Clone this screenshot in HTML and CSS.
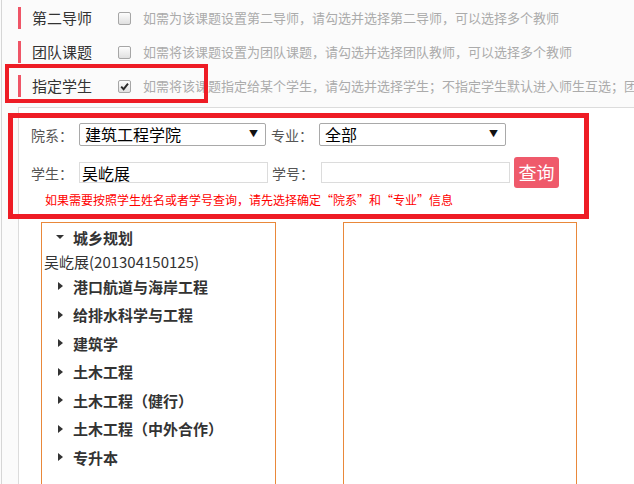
FILE: index.html
```html
<!DOCTYPE html>
<html lang="zh-CN">
<head>
  <meta charset="UTF-8" />
  <meta name="viewport" content="width=device-width, initial-scale=1.0" />
  <title>课题设置</title>
  <link rel="stylesheet" href="styles.css">
</head>
<body>
  <div class="page">
    <div class="opt-row">
      <span class="opt-name">第二导师</span>
      <span class="cbox"></span>
      <span class="opt-tip">如需为该课题设置第二导师，请勾选并选择第二导师，可以选择多个教师</span>
    </div>
    <div class="opt-row">
      <span class="opt-name">团队课题</span>
      <span class="cbox"></span>
      <span class="opt-tip">如需将该课题设置为团队课题，请勾选并选择团队教师，可以选择多个教师</span>
    </div>
    <div class="opt-row">
      <span class="opt-name">指定学生</span>
      <span class="cbox">
        <svg width="9" height="9" viewBox="0 0 9 9"><path d="M1.2 4.6 L3.6 7.2 L8 1.6" fill="none" stroke="#2b2b2b" stroke-width="1.9" /></svg>
      </span>
      <span class="opt-tip">如需将该课题指定给某个学生，请勾选并选择学生；不指定学生默认进入师生互选；团</span>
    </div>

    <div class="panel">
      <form class="search">
        <div class="s-line">
          <label class="s-label">院系：</label>
          <span class="sel-wrap">
            <select class="sel">
              <option>建筑工程学院</option>
            </select>
          </span>
          <label class="s-label s-label-2">专业：</label>
          <span class="sel-wrap">
            <select class="sel">
              <option>全部</option>
            </select>
          </span>
        </div>
        <div class="s-line s-line-2">
          <label class="s-label">学生：</label>
          <input type="text" class="txt" value="吴屹展" />
          <label class="s-label s-label-3">学号：</label>
          <input type="text" class="txt txt-2" value="" />
          <button type="button" class="btn-query">查询</button>
        </div>
        <p class="s-hint">如果需要按照学生姓名或者学号查询，请先选择确定“院系”和“专业”信息</p>
      </form>

      <div class="pick">
        <div class="tree-box">
          <div class="tree-node open"><span class="tri"></span>城乡规划</div>
          <div class="tree-leaf">吴屹展(201304150125)</div>
          <div class="tree-node"><span class="tri"></span>港口航道与海岸工程</div>
          <div class="tree-node"><span class="tri"></span>给排水科学与工程</div>
          <div class="tree-node"><span class="tri"></span>建筑学</div>
          <div class="tree-node"><span class="tri"></span>土木工程</div>
          <div class="tree-node"><span class="tri"></span>土木工程（健行）</div>
          <div class="tree-node"><span class="tri"></span>土木工程（中外合作）</div>
          <div class="tree-node"><span class="tri"></span>专升本</div>
        </div>
        <div class="tree-box tree-box-2"></div>
      </div>
    </div>
  </div>

  <div class="mark mark-opt"></div>
  <div class="mark mark-search"></div>
</body>
</html>
```

FILE: styles.css
```css
html, body {
  margin: 0;
  height: 100%;
}
body {
  font-family: "Noto Sans CJK SC", "Liberation Sans", sans-serif;
  background-color: #fbfbfb;
  color: #333;
  overflow: hidden;
}
.page {
  margin-left: 1px;
  border-left: 1px solid #d6d6d6;
  height: 100%;
  padding-top: 1px;
  box-sizing: border-box;
  overflow: hidden;
}

/* option rows */
.opt-row {
  display: flex;
  align-items: center;
  height: 34px;
  margin-left: 16px;
  white-space: nowrap;
  overflow: hidden;
}
.opt-name {
  box-sizing: border-box;
  width: 100px;
  flex-shrink: 0;
  border-left: 3px solid #ef5567;
  padding-left: 11px;
  line-height: 22px;
  font-size: 15px;
  color: #333;
}
.cbox {
  width: 11px;
  height: 11px;
  border: 1px solid #a6a6a6;
  border-radius: 2px;
  background: linear-gradient(#fdfdfd, #e0e0e0);
  margin-right: 12px;
  display: flex;
  align-items: center;
  justify-content: center;
  flex-shrink: 0;
}
.opt-tip {
  font-size: 13px;
  color: #ababab;
  line-height: 20px;
}

/* panel */
.panel {
  margin: 4px 0 0 16px;
  border-top: 1px solid #dcdcdc;
  border-left: 1px solid #dcdcdc;
  background-color: #fff;
  height: 400px;
}
.search {
  margin: 0;
  padding: 15px 0 0 12px;
}
.s-line {
  display: flex;
  align-items: center;
  height: 23px;
  font-size: 14px;
  color: #555;
}
.s-line-2 {
  margin-top: 11px;
  height: 31px;
}
.s-label {
  width: 48px;
  line-height: 20px;
  white-space: nowrap;
}
.s-label-2 {
  margin-left: 5px;
}
.s-label-3 {
  margin-left: 4px;
}
.sel-wrap {
  position: relative;
  display: block;
}
.sel-wrap::after {
  content: "▼";
  position: absolute;
  right: 8px;
  top: 6px;
  font-size: 9px;
  line-height: 10px;
  color: #111;
  pointer-events: none;
}
.sel {
  -webkit-appearance: none;
  appearance: none;
  box-sizing: border-box;
  width: 187px;
  height: 23px;
  border: 1px solid #a9a9a9;
  border-radius: 2px;
  background: #fff;
  padding: 0 0 0 5px;
  font-family: inherit;
  font-size: 16px;
  line-height: 21px;
  color: #000;
  outline: none;
}
.txt {
  box-sizing: border-box;
  width: 189px;
  height: 21px;
  border: 1px solid #dcdcdc;
  padding: 0 2px;
  font-family: inherit;
  font-size: 16px;
  color: #000;
  outline: none;
}
.txt-2 {
  margin-left: 1px;
}
.btn-query {
  margin-left: 4px;
  width: 45px;
  height: 31px;
  border: none;
  border-radius: 3px;
  background-color: #ef5a6b;
  color: #fff;
  font-family: inherit;
  font-size: 18px;
  line-height: 31px;
  padding: 0;
  cursor: pointer;
}
.s-hint {
  margin: 4px 0 0 14px;
  font-size: 12px;
  line-height: 16px;
  color: #ff0000;
  white-space: nowrap;
}

/* tree picker */
.pick {
  display: flex;
  gap: 67px;
  margin-top: 14px;
  padding-left: 22px;
}
.tree-box {
  box-sizing: border-box;
  width: 235px;
  height: 263px;
  border: 1px solid #e9883a;
  padding-top: 0;
}
.tree-box-2 {
  width: 234px;
}
.tree-node {
  display: flex;
  align-items: center;
  height: 28.5px;
  font-size: 15px;
  font-weight: 700;
  color: #333;
  white-space: nowrap;
}
.tri {
  width: 8px;
  margin: 0 9px 0 14px;
  display: flex;
  justify-content: center;
}
.tri::before {
  content: "";
  width: 0;
  height: 0;
  border-top: 4px solid transparent;
  border-bottom: 4px solid transparent;
  border-left: 5px solid #333;
}
.open .tri::before {
  border-left: 4px solid transparent;
  border-right: 4px solid transparent;
  border-top: 4px solid #333;
  border-bottom: none;
}
.tree-leaf {
  height: 20.5px;
  line-height: 20.5px;
  padding-left: 2px;
  font-size: 15px;
  color: #333;
  white-space: nowrap;
}

/* annotation frames */
.mark {
  position: absolute;
  box-sizing: border-box;
  border: 4px solid #ee1c25;
}
.mark-opt {
  left: 5px;
  top: 64px;
  width: 203px;
  height: 39px;
}
.mark-search {
  left: 8px;
  top: 113px;
  width: 581px;
  height: 106px;
  border-width: 5px;
}
```
